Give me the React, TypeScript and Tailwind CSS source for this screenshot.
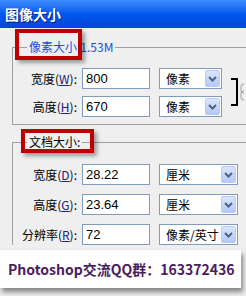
import React from "react";

const cjk = "font-['Noto_Sans_CJK_SC',sans-serif]";

function Chevron() {
  return (
    <svg width="9" height="6" viewBox="0 0 9 6">
      <path d="M1 1 L4.5 4.5 L8 1" stroke="#4d6185" strokeWidth="2" fill="none" />
    </svg>
  );
}

function Select({ text, wide }: { text: string; wide?: boolean }) {
  return (
    <div
      className={`${wide ? "w-[79px]" : "w-[63px]"} h-[21px] ml-[9px] border border-[#7f9db9] bg-white flex items-center justify-between pl-[6px] pr-[1px]`}
    >
      <span className={`${cjk} text-[12px] leading-none text-black`}>{text}</span>
      <div className="w-[15px] h-[17px] rounded-[2px] border border-[#b9cbf3] bg-gradient-to-b from-[#dbe5fe] to-[#b4c8f7] flex items-center justify-center">
        <Chevron />
      </div>
    </div>
  );
}

function Row({
  label,
  key1,
  value,
  unit,
  wide,
}: {
  label: string;
  key1: string;
  value: string;
  unit: string;
  wide?: boolean;
}) {
  return (
    <div className="flex items-center h-[21px]">
      <div className={`w-[64px] text-right ${cjk} text-[12px] leading-none text-black whitespace-nowrap`}>
        {label}(<span className="underline text-[#202080]">{key1}</span>):
      </div>
      <div className="w-[68px] h-[21px] ml-[5px] border border-[#7f9db9] bg-white flex items-center pl-[3px]">
        <span className="font-['Liberation_Sans',sans-serif] text-[13px] leading-none text-black">{value}</span>
      </div>
      <Select text={unit} wide={wide} />
    </div>
  );
}

export default function App() {
  return (
    <div className="w-[246px] h-[296px] bg-[#efefef] relative overflow-hidden flex flex-col">
      <div className="h-[28px] shrink-0 bg-gradient-to-b from-[#3f8cff] via-[#0058ee] to-[#0046d8] flex items-center pl-[5px]">
        <span className={`${cjk} text-[14px] font-bold text-white leading-none [text-shadow:1px_1px_0_#0a1a80]`}>
          图像大小
        </span>
      </div>

      <div className="relative mt-[19px] ml-[12px] w-[260px] border-l border-t border-b border-[#a0a0a0] pt-[20px] pb-[7px] flex flex-col gap-[7px]">
        <div className={`absolute left-[14px] top-[-8px] bg-[#efefef] px-[2px] ${cjk} text-[12px] leading-[14px] text-[#1a4fd6]`}>
          像素大小:1.53M
        </div>
        <Row label="宽度" key1="W" value="800" unit="像素" />
        <Row label="高度" key1="H" value="670" unit="像素" />
        <svg className="absolute left-[215px] top-[30px]" width="16" height="30" viewBox="0 0 16 30">
          <path d="M3 1 H9 V27 H3" stroke="#000" strokeWidth="2" fill="none" />
          <rect x="13" y="6" width="5" height="9" rx="2.5" stroke="#9a9a9a" strokeWidth="1" fill="none" />
          <rect x="13" y="13" width="5" height="9" rx="2.5" stroke="#9a9a9a" strokeWidth="1" fill="none" />
        </svg>
      </div>

      <div className="relative mt-[17px] ml-[12px] w-[260px] border-l border-t border-[#a0a0a0] pt-[21px] flex flex-col gap-[9px]">
        <div className={`absolute left-[14px] top-[-8px] bg-[#efefef] px-[2px] ${cjk} text-[12px] leading-[14px] text-black`}>
          文档大小:
        </div>
        <Row label="宽度" key1="D" value="28.22" unit="厘米" wide />
        <Row label="高度" key1="G" value="23.64" unit="厘米" wide />
        <Row label="分辨率" key1="R" value="72" unit="像素/英寸" wide />
      </div>

      {/* red highlight boxes */}
      <div className="absolute left-[15px] top-[29px] w-[67px] h-[31px] border-[4px] border-[#c00000] shadow-[3px_3px_4px_rgba(0,0,0,0.35)]" />
      <div className="absolute left-[21px] top-[129px] w-[73px] h-[24px] border-[4px] border-[#c00000] shadow-[3px_3px_4px_rgba(0,0,0,0.35)]" />

      {/* watermark banner */}
      <div className="absolute left-0 top-[250px] w-[241px] h-[38px] bg-white shadow-[2px_4px_5px_rgba(0,0,0,0.45)] flex items-center pl-[8px]">
        <span className={`${cjk} text-[14px] font-bold text-[#4b1d5c] leading-none whitespace-nowrap`}>
          Photoshop交流QQ群：163372436
        </span>
      </div>
    </div>
  );
}
